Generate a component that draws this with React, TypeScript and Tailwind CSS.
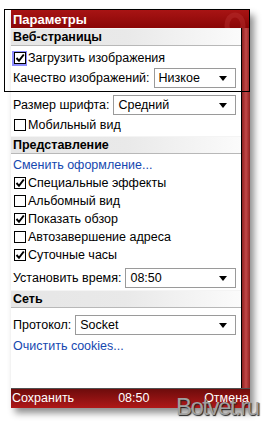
import type { ReactNode } from "react"

const Check = ({ on, focus }: { on?: boolean; focus?: boolean }) => (
    <span className={`flex items-center justify-center w-[15px] h-[15px] shrink-0 ${focus ? "border-2 border-[#8c8cff]" : ""}`}>
        <span className="flex items-center justify-center w-[12px] h-[12px] border border-black bg-white">
            {on && (
                <svg width="10" height="10" viewBox="0 0 10 10">
                    <path d="M1.5 5 L4 7.8 L8.8 1.5" fill="none" stroke="#000" strokeWidth="2" />
                </svg>
            )}
        </span>
    </span>
)

const CheckRow = ({ label, on, focus }: { label: string; on?: boolean; focus?: boolean }) => (
    <div className="flex items-center h-[18px] gap-[1px] whitespace-nowrap">
        <Check on={on} focus={focus} />
        <span>{label}</span>
    </div>
)

const Select = ({ value }: { value: string }) => (
    <div className="flex-1 flex items-center justify-between h-[20px] border border-[#9a9a9a] bg-white pl-[4px] pr-[8px]">
        <span>{value}</span>
        <svg width="8" height="5" viewBox="0 0 8 5">
            <path d="M0 0 H8 L4 5 Z" fill="#000" />
        </svg>
    </div>
)

const SelectRow = ({ label, value }: { label: string; value: string }) => (
    <div className="flex items-center h-[22px] gap-[4px] whitespace-nowrap">
        <span className="shrink-0">{label}</span>
        <Select value={value} />
    </div>
)

const Header = ({ children }: { children: ReactNode }) => (
    <div className="flex items-center h-[18px] pl-[2px] font-bold bg-gradient-to-r from-[#e6e6e6] via-[#e9e9e9] to-[#fbfbfb] border-b border-[#b8b8b8] border-t border-t-[#f4f4f4]">
        {children}
    </div>
)

export default function App() {
    return (
        <div className="relative w-[264px] h-[423px] bg-white overflow-hidden text-[12.5px] leading-none text-black" style={{ fontFamily: '"Liberation Sans", Arial, sans-serif' }}>
            <div className="ml-[11px] mt-[10px] w-[239px] h-[398px] flex flex-col bg-white shadow-[4px_5px_7px_rgba(0,0,0,0.45)]">
                <div className="relative h-[18px] flex items-center pl-[2px] text-white font-bold text-[13px] bg-gradient-to-b from-[#a81414] to-[#8a0606] overflow-hidden">
                    Параметры
                    <svg className="absolute right-[3px] top-[1px]" width="24" height="26" viewBox="0 0 24 26">
                        <ellipse cx="12" cy="14" rx="8" ry="10" fill="none" stroke="#b83030" strokeWidth="5" opacity="0.45" />
                    </svg>
                </div>
                <div className="flex flex-1">
                    <div className="flex-1 flex flex-col">
                        <Header>Веб-страницы</Header>
                        <div className="flex flex-col pl-[1px] pr-[5px] pt-[1px]">
                            <div className="h-[2px]" />
                            <CheckRow label="Загрузить изображения" on focus />
                            <div className="pl-[1px]">
                                <SelectRow label="Качество изображений:" value="Низкое" />
                            </div>
                            <div className="h-[5px]" />
                            <div className="pl-[1px]">
                                <SelectRow label="Размер шрифта:" value="Средний" />
                            </div>
                            <CheckRow label="Мобильный вид" />
                        </div>
                        <div className="h-[2px]" />
                        <Header>Представление</Header>
                        <div className="flex flex-col pl-[1px] pr-[5px] pt-[1px]">
                            <div className="flex items-center h-[18px] pl-[1px] mt-[1px] text-[#1548b0]">Сменить оформление...</div>
                            <CheckRow label="Специальные эффекты" on />
                            <CheckRow label="Альбомный вид" />
                            <CheckRow label="Показать обзор" on />
                            <CheckRow label="Автозавершение адреса" />
                            <CheckRow label="Суточные часы" on />
                            <div className="h-[3px]" />
                            <div className="pl-[1px]">
                                <SelectRow label="Установить время:" value="08:50" />
                            </div>
                        </div>
                        <div className="h-[1px]" />
                        <Header>Сеть</Header>
                        <div className="flex flex-col pl-[2px] pr-[5px] pt-[6px]">
                            <SelectRow label="Протокол:" value="Socket" />
                            <div className="flex items-center h-[20px] text-[#1548b0]">Очистить cookies...</div>
                        </div>
                    </div>
                    <div className="w-[9px] mt-[-3px] border-l border-black bg-gradient-to-r from-[#8f2020] via-[#c24848] to-[#8f2020]" />
                </div>
                <div className="h-[20px] flex items-center px-[1px] text-white text-[12.5px] border-t border-[#505050] bg-gradient-to-b from-[#6e0c0c] to-[#b01818] whitespace-nowrap">
                    <span>Сохранить</span>
                    <span className="ml-[44px]">08:50</span>
                    <span className="flex-1" />
                    <span>Отмена</span>
                </div>
            </div>
            <div className="absolute left-[4px] top-[9px] w-[246px] h-[83px] border border-black pointer-events-none" />
            <div className="absolute left-[176px] top-[395px] text-[24px] leading-none text-[#a0a0a0] tracking-[-1.5px] [text-shadow:1px_1px_1px_#222]" style={{ fontFamily: '"Liberation Sans", Arial, sans-serif' }}>
                Botvet.ru
            </div>
        </div>
    )
}
